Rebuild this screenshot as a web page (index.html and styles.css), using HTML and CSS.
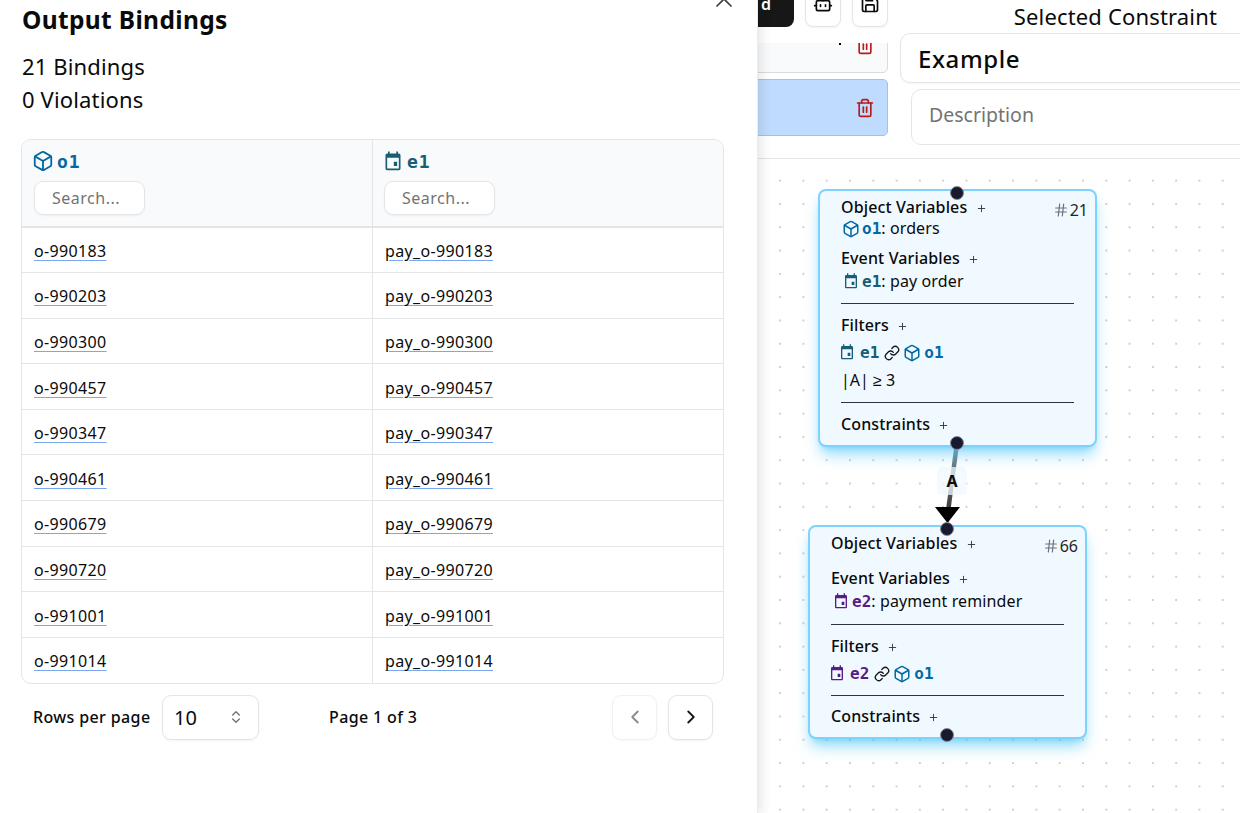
FILE: index.html

```html
<!DOCTYPE html>
<html lang="en">

<head>
    <meta charset="UTF-8">
    <meta name="viewport" content="width=device-width, initial-scale=1.0">
    <title>Output Bindings</title>
    <link rel="stylesheet" href="styles.css">
</head>

<body>
    <svg class="icon-defs" aria-hidden="true">
        <symbol id="i-box" viewBox="0 0 24 24">
            <path d="M21 8a2 2 0 0 0-1-1.73l-7-4a2 2 0 0 0-2 0l-7 4A2 2 0 0 0 3 8v8a2 2 0 0 0 1 1.73l7 4a2 2 0 0 0 2 0l7-4A2 2 0 0 0 21 16Z" />
            <path d="m3.3 7 8.7 5 8.7-5" />
            <path d="M12 22V12" />
        </symbol>
        <symbol id="i-event" viewBox="0 0 24 24">
            <path class="solid" d="M17 13h-4v5h4v-5zM16 .5V3H8V.5H6V3H5C3.9 3 3 3.9 3 5v16c0 1.1.9 2 2 2h14c1.1 0 2-.9 2-2V5c0-1.1-.9-2-2-2h-1V.5h-2zM19 21H5V8h14v13z" />
        </symbol>
        <symbol id="i-link" viewBox="0 0 24 24">
            <path d="M10 13a5 5 0 0 0 7.54.54l3-3a5 5 0 0 0-7.07-7.07l-1.72 1.71" />
            <path d="M14 11a5 5 0 0 0-7.54-.54l-3 3a5 5 0 0 0 7.07 7.07l1.71-1.71" />
        </symbol>
        <symbol id="i-plus" viewBox="0 0 24 24">
            <path d="M5 12h14" />
            <path d="M12 5v14" />
        </symbol>
        <symbol id="i-hash" viewBox="0 0 24 24">
            <path d="M4 9h16" />
            <path d="M4 15h16" />
            <path d="M10 3 8 21" />
            <path d="M16 3l-2 18" />
        </symbol>
        <symbol id="i-trash" viewBox="0 0 24 24">
            <path d="M3 6h18" />
            <path d="M19 6v14c0 1-1 2-2 2H7c-1 0-2-1-2-2V6" />
            <path d="M8 6V4c0-1 1-2 2-2h4c1 0 2 1 2 2v2" />
            <path d="M10 11v6" />
            <path d="M14 11v6" />
        </symbol>
    </svg>

    <div class="top-panel">
        <div class="left-col">
            <div class="toolbar">
                <button class="btn-dark">d</button>
                <button class="btn-icon">
                    <svg class="ico" width="20" height="20" viewBox="0 0 24 24"><path d="M12 8V4H8" /><rect x="4" y="8" width="16" height="12" rx="2" /><path d="M2 14h2" /><path d="M20 14h2" /><path d="M15 13v2" /><path d="M9 13v2" /></svg>
                </button>
                <button class="btn-icon">
                    <svg class="ico" width="20" height="20" viewBox="0 0 24 24"><path d="M15.2 3a2 2 0 0 1 1.4.6l3.8 3.8a2 2 0 0 1 .6 1.4V19a2 2 0 0 1-2 2H5a2 2 0 0 1-2-2V5a2 2 0 0 1 2-2z" /><path d="M17 21v-7a1 1 0 0 0-1-1H8a1 1 0 0 0-1 1v7" /><path d="M7 3v4a1 1 0 0 0 1 1h7" /></svg>
                </button>
            </div>
            <div class="constraint-list">
                <div class="list-item first">
                    <span class="clipped-mark"></span>
                    <svg class="ico trash" width="20" height="20"><use href="#i-trash" /></svg>
                </div>
                <div class="list-item active">
                    <svg class="ico trash" width="20" height="20"><use href="#i-trash" /></svg>
                </div>
            </div>
        </div>
        <div class="right-col">
            <div class="selected-title">Selected Constraint</div>
            <input class="name-input" value="Example">
            <input class="desc-input" placeholder="Description">
        </div>
    </div>

    <div class="canvas">
        <svg class="edge" width="40" height="90" viewBox="0 0 40 90">
            <defs>
                <linearGradient id="edge-grad" x1="0" y1="0" x2="0" y2="1">
                    <stop offset="0" stop-color="#7d99a8" />
                    <stop offset="1" stop-color="#3a3a3a" />
                </linearGradient>
            </defs>
            <path d="M27 1 L18 70" stroke="url(#edge-grad)" stroke-width="4.5" fill="none" />
            <polygon points="5,65 30,65 17.5,81" fill="#000" />
        </svg>
        <div class="edge-label">A</div>

        <div class="node node-one">
            <span class="handle handle-top"></span>
            <span class="node-id"><svg class="ico hash" width="16" height="16"><use href="#i-hash" /></svg>21</span>
            <div class="sec-title">Object Variables <svg class="ico plus" width="11" height="11"><use href="#i-plus" /></svg></div>
            <div class="var-row tight"><svg class="ico obj" width="18" height="18"><use href="#i-box" /></svg><b class="mono obj">o1</b>: orders</div>
            <div class="sec-title gap">Event Variables <svg class="ico plus" width="11" height="11"><use href="#i-plus" /></svg></div>
            <div class="var-row"><svg class="ico teal" width="16" height="16"><use href="#i-event" /></svg><b class="mono teal">e1</b>: pay order</div>
            <hr class="rule">
            <div class="sec-title">Filters <svg class="ico plus" width="11" height="11"><use href="#i-plus" /></svg></div>
            <div class="filter-row">
                <svg class="ico teal" width="16" height="16"><use href="#i-event" /></svg><b class="mono teal">e1</b>
                <svg class="ico link" width="16" height="16"><use href="#i-link" /></svg>
                <svg class="ico obj" width="18" height="18"><use href="#i-box" /></svg><b class="mono obj">o1</b>
            </div>
            <div class="count-row">|A| ≥ 3</div>
            <hr class="rule">
            <div class="sec-title">Constraints <svg class="ico plus" width="11" height="11"><use href="#i-plus" /></svg></div>
            <span class="handle handle-bottom"></span>
        </div>

        <div class="node node-two">
            <span class="handle handle-top"></span>
            <span class="node-id"><svg class="ico hash" width="16" height="16"><use href="#i-hash" /></svg>66</span>
            <div class="sec-title">Object Variables <svg class="ico plus" width="11" height="11"><use href="#i-plus" /></svg></div>
            <div class="sec-title gap-wide">Event Variables <svg class="ico plus" width="11" height="11"><use href="#i-plus" /></svg></div>
            <div class="var-row"><svg class="ico purple" width="16" height="16"><use href="#i-event" /></svg><b class="mono purple">e2</b>: payment reminder</div>
            <hr class="rule rule-first">
            <div class="sec-title">Filters <svg class="ico plus" width="11" height="11"><use href="#i-plus" /></svg></div>
            <div class="filter-row">
                <svg class="ico purple" width="16" height="16"><use href="#i-event" /></svg><b class="mono purple">e2</b>
                <svg class="ico link" width="16" height="16"><use href="#i-link" /></svg>
                <svg class="ico obj" width="18" height="18"><use href="#i-box" /></svg><b class="mono obj">o1</b>
            </div>
            <hr class="rule rule-low">
            <div class="sec-title">Constraints <svg class="ico plus" width="11" height="11"><use href="#i-plus" /></svg></div>
            <span class="handle handle-bottom"></span>
        </div>
    </div>

    <!-- side sheet lies over the editor -->
    <div class="sheet">
        <svg class="ico sheet-close" width="28" height="28" viewBox="0 0 24 24"><path d="M18 6 6 18" /><path d="m6 6 12 12" /></svg>
        <h2 class="sheet-title">Output Bindings</h2>
        <p class="sheet-stat">21 Bindings</p>
        <p class="sheet-stat">0 Violations</p>

        <div class="table-wrap">
            <table class="bindings">
                <thead>
                    <tr>
                        <th>
                            <div class="col-name obj"><svg class="ico obj box-head" width="22" height="22"><use href="#i-box" /></svg><span class="mono">o1</span></div>
                            <input class="col-search" placeholder="Search...">
                        </th>
                        <th>
                            <div class="col-name teal"><svg class="ico teal event-head" width="20" height="20"><use href="#i-event" /></svg><span class="mono">e1</span></div>
                            <input class="col-search" placeholder="Search...">
                        </th>
                    </tr>
                </thead>
                <tbody>
                    <tr><td><a>o-990183</a></td><td><a>pay_o-990183</a></td></tr>
                    <tr><td><a>o-990203</a></td><td><a>pay_o-990203</a></td></tr>
                    <tr><td><a>o-990300</a></td><td><a>pay_o-990300</a></td></tr>
                    <tr><td><a>o-990457</a></td><td><a>pay_o-990457</a></td></tr>
                    <tr><td><a>o-990347</a></td><td><a>pay_o-990347</a></td></tr>
                    <tr><td><a>o-990461</a></td><td><a>pay_o-990461</a></td></tr>
                    <tr><td><a>o-990679</a></td><td><a>pay_o-990679</a></td></tr>
                    <tr><td><a>o-990720</a></td><td><a>pay_o-990720</a></td></tr>
                    <tr><td><a>o-991001</a></td><td><a>pay_o-991001</a></td></tr>
                    <tr><td><a>o-991014</a></td><td><a>pay_o-991014</a></td></tr>
                </tbody>
            </table>
        </div>

        <div class="pager">
            <span class="pager-label">Rows per page</span>
            <div class="rows-select">
                <span>10</span>
                <svg class="ico chevrons" width="16" height="16" viewBox="0 0 24 24"><path d="m7 15 5 5 5-5" /><path d="m7 9 5-5 5 5" /></svg>
            </div>
            <span class="pager-label page-of">Page 1 of 3</span>
            <button class="page-btn disabled"><svg class="ico" width="22" height="22" viewBox="0 0 24 24"><path d="m15 18-6-6 6-6" /></svg></button>
            <button class="page-btn"><svg class="ico" width="22" height="22" viewBox="0 0 24 24"><path d="m9 18 6-6-6-6" /></svg></button>
        </div>
    </div>
</body>

</html>
```

FILE: styles.css

```css
* {
    box-sizing: border-box;
}

html, body {
    margin: 0;
    height: 813px;
    overflow: hidden;
}

body {
    position: relative;
    font-family: "Noto Sans", sans-serif;
    font-size: 16px;
    color: #0a0a0a;
    background: #fff;
}

.icon-defs {
    display: none;
}

.ico {
    fill: none;
    stroke: currentColor;
    stroke-width: 2;
    stroke-linecap: round;
    stroke-linejoin: round;
    flex: none;
}

.solid {
    fill: currentColor;
    stroke: none;
}

.mono {
    font-family: "DejaVu Sans Mono", monospace;
    font-weight: 700;
}

.obj {
    color: #0369a1;
}

.teal {
    color: #155e75;
}

.purple {
    color: #581c87;
}

/* top panel */
.top-panel {
    display: grid;
    grid-template-columns: 888px 1fr;
    height: 159px;
    border-bottom: 1px solid #e5e5e5;
    overflow: hidden;
}

.left-col {
    min-width: 0;
}

.toolbar {
    display: flex;
    justify-content: flex-end;
    gap: 11px;
    height: 46px;
    margin-top: -19px;
}

.btn-dark {
    width: 120px;
    height: 46px;
    padding: 0 23px 0 0;
    border: none;
    border-radius: 8px;
    background: #171717;
    color: #fff;
    font: 600 16px "Noto Sans", sans-serif;
    text-align: right;
}

.btn-icon {
    display: flex;
    align-items: center;
    justify-content: center;
    width: 36px;
    height: 46px;
    padding: 0;
    border: 1px solid #e5e5e5;
    border-radius: 8px;
    background: #fff;
    color: #0a0a0a;
    box-shadow: 0 1px 2px rgba(0, 0, 0, .05);
}

.constraint-list {
    display: flex;
    flex-direction: column;
    gap: 6px;
    height: 100px;
    margin-top: 16px;
    overflow: hidden;
}

.list-item {
    position: relative;
    display: flex;
    align-items: center;
    justify-content: flex-end;
    flex: none;
    height: 57px;
    padding-right: 12px;
    border: 1px solid #d9dce1;
    border-radius: 5px;
    background: #f9fafb;
}

.list-item.first {
    margin-top: -27px;
}

.list-item.active {
    border-color: #93c5fd;
    background: #bfdbfe;
}

.trash {
    color: #b91c1c;
}

.clipped-mark {
    position: absolute;
    left: 838px;
    top: 26px;
    width: 2px;
    height: 2px;
    background: #000;
}

.right-col {
    min-width: 0;
    padding-left: 12px;
}

.selected-title {
    width: 340px;
    height: 33px;
    padding-right: 23px;
    font-size: 22px;
    letter-spacing: .16px;
    line-height: 32px;
    text-align: right;
    white-space: nowrap;
}

.name-input,
.desc-input {
    display: block;
    border: 1px solid #e5e5e5;
    border-radius: 10px;
    background: #fff;
    color: #0a0a0a;
    font-family: "Noto Sans", sans-serif;
    outline: none;
}

.name-input {
    width: 420px;
    height: 50px;
    padding: 0 17px;
    font-size: 24px;
    font-weight: 500;
    letter-spacing: .6px;
    box-shadow: 0 1px 2px rgba(0, 0, 0, .04);
}

.desc-input {
    width: 410px;
    height: 56px;
    margin: 6px 0 0 11px;
    padding: 0 17px 5px;
    font-size: 19.5px;
}

.desc-input::placeholder,
.col-search::placeholder {
    color: #737373;
    opacity: 1;
}

/* flow canvas */
.canvas {
    position: relative;
    height: 654px;
    background-image: radial-gradient(circle, #cfcfcf 0.8px, transparent 1px);
    background-size: 23.3px 23.3px;
    background-position: -0.35px 10px;
}

.edge {
    position: absolute;
    left: 930px;
    top: 283px;
}

.edge-label {
    position: absolute;
    left: 937px;
    top: 308px;
    width: 30px;
    height: 28px;
    border-radius: 5px;
    background: rgba(240, 248, 255, .75);
    font-size: 16px;
    font-weight: 700;
    line-height: 28px;
    text-align: center;
}

.node {
    position: absolute;
    width: 279px;
    padding: 5px 21px 10px 21px;
    border: 2px solid #7dd3fc;
    border-radius: 8px;
    background: #f0f9ff;
    box-shadow: 0 10px 15px -3px rgba(56, 189, 248, .55), 0 4px 6px -4px rgba(56, 189, 248, .55);
}

.node-one {
    left: 818px;
    top: 30px;
}

.node-two {
    left: 808px;
    top: 366px;
}

.handle {
    position: absolute;
    left: 50%;
    width: 14px;
    height: 14px;
    margin-left: -8px;
    border: 1px solid #8a8a96;
    border-radius: 50%;
    background: #1a1a2e;
    z-index: 2;
}

.handle-top {
    top: -5px;
}

.handle-bottom {
    bottom: -5px;
}

.node-id {
    position: absolute;
    top: 7px;
    right: 7px;
    display: flex;
    align-items: center;
    gap: 1px;
    color: #262626;
    line-height: 24px;
}

.hash {
    color: #6b7280;
    stroke-width: 1.8;
}

.sec-title {
    height: 22px;
    font-weight: 500;
    letter-spacing: .13px;
    line-height: 22px;
    white-space: nowrap;
}

.sec-title.gap {
    margin-top: 9px;
}

.sec-title.gap-wide {
    margin-top: 13px;
}

.plus {
    margin-left: 4px;
    color: #333;
    vertical-align: -1px;
}

.var-row {
    display: flex;
    align-items: center;
    height: 24px;
    padding-left: 2px;
    letter-spacing: .12px;
    white-space: nowrap;
}

.var-row.tight {
    height: 20px;
}

.var-row .ico {
    margin-right: 3px;
}

.var-row .obj.ico {
    margin: 1px 2px 0 -1px;
}

.var-row .mono {
    font-size: 16px;
    letter-spacing: 0;
}

.rule {
    height: 1px;
    margin: 10px 0;
    border: none;
    background: #2b3440;
}

.rule-first {
    margin-top: 11px;
}

.rule-low {
    margin: 9px 0;
}

.filter-row {
    display: flex;
    align-items: center;
    height: 26px;
    margin: 3px 0 0 -2px;
    white-space: nowrap;
}

.filter-row .mono {
    margin-left: 5px;
    font-size: 16px;
}

.filter-row .link {
    margin: 1px 5px 0 5px;
    color: #171717;
}

.filter-row .obj.ico {
    margin: 2px 0 0 -2px;
}

.filter-row .obj.ico + .mono {
    margin-left: 3px;
}

.count-row {
    height: 24px;
    margin-top: 3px;
    line-height: 24px;
}

/* side sheet */
.sheet {
    position: absolute;
    left: 0;
    top: 0;
    width: 758px;
    height: 813px;
    padding: 0 33px 0 21px;
    background: #fff;
    border-right: 1px solid #ececec;
    box-shadow: 0 10px 15px -3px rgba(0, 0, 0, .1), 4px 0 12px rgba(0, 0, 0, .06);
    z-index: 5;
}

.sheet-close {
    position: absolute;
    left: 710px;
    top: -15px;
    color: #404040;
    stroke-width: 1.5;
}

.sheet-title {
    margin: 0 0 10px 1px;
    font-size: 24.5px;
    font-weight: 700;
    letter-spacing: .35px;
    line-height: 40px;
}

.sheet-stat {
    margin: 0 0 0 1px;
    font-size: 22px;
    letter-spacing: .15px;
    line-height: 33px;
}

.table-wrap {
    width: 703px;
    margin-top: 23px;
    border: 1px solid #e5e5e5;
    border-radius: 10px;
    overflow: hidden;
}

.bindings {
    width: 100%;
    border-collapse: collapse;
    table-layout: fixed;
}

.bindings th {
    height: 87px;
    padding: 9px 12px 0 12px;
    border-bottom: 2px solid #e5e5e5;
    background: #f8fafc;
    text-align: left;
    vertical-align: top;
}

.bindings th + th {
    padding-left: 11px;
}

.bindings td {
    height: 45.6px;
    padding: 2px 12px 0;
    border-top: 1px solid #e5e5e5;
}

.bindings tbody tr:first-child td {
    border-top: none;
}

.bindings th + th,
.bindings td + td {
    border-left: 1px solid #e5e5e5;
}

.bindings a {
    color: #0a0a0a;
    letter-spacing: .35px;
    text-decoration: underline;
    text-decoration-color: #7aa7ef;
    text-underline-offset: 3px;
}

.col-name {
    display: flex;
    align-items: center;
    gap: 5px;
    height: 24px;
    font-size: 18px;
    letter-spacing: 1px;
}

.box-head {
    margin: 0 -2px;
}

.event-head {
    margin: 0 -1px 0 -1px;
}

.col-search {
    display: block;
    width: 111px;
    height: 34px;
    margin-top: 8px;
    padding: 0 17px;
    border: 1px solid #e5e5e5;
    border-radius: 9px;
    background: #fff;
    font-family: "Noto Sans", sans-serif;
    font-size: 16px;
    font-weight: 400;
    letter-spacing: .5px;
    box-shadow: 0 1px 2px rgba(0, 0, 0, .05);
    outline: none;
}

.pager {
    display: flex;
    align-items: center;
    gap: 11px;
    height: 45px;
    margin-top: 11px;
    padding: 0 11px 0 12px;
}

.pager-label {
    font-weight: 500;
    letter-spacing: .37px;
    white-space: nowrap;
}

.pager-label:first-child {
    width: 118px;
}

.page-of {
    margin: 0 auto 0 59px;
}

.rows-select {
    display: flex;
    align-items: center;
    justify-content: space-between;
    width: 97px;
    height: 45px;
    padding: 0 14px 0 11px;
    border: 1px solid #e5e5e5;
    border-radius: 9px;
    font-size: 20px;
    box-shadow: 0 1px 2px rgba(0, 0, 0, .05);
}

.chevrons {
    color: #737373;
}

.page-btn {
    display: flex;
    align-items: center;
    justify-content: center;
    width: 45px;
    height: 45px;
    padding: 0;
    border: 1px solid #e5e5e5;
    border-radius: 9px;
    background: #fff;
    color: #171717;
    box-shadow: 0 1px 2px rgba(0, 0, 0, .05);
}

.page-btn.disabled {
    opacity: .5;
}
```
